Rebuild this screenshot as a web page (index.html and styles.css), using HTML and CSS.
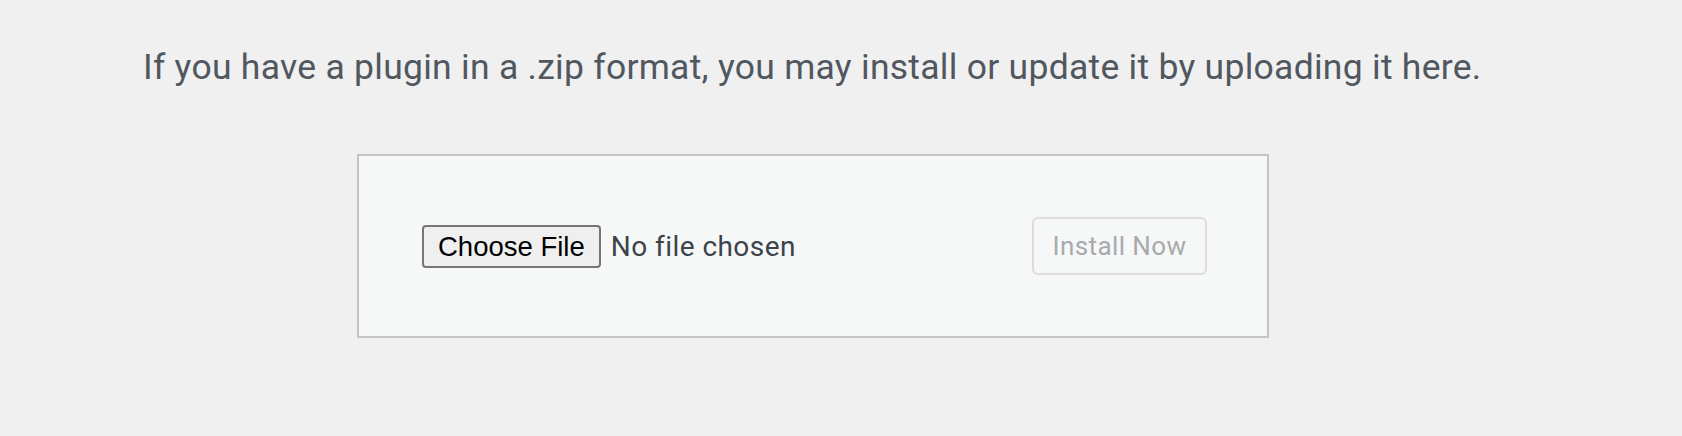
FILE: index.html
```html
<!DOCTYPE html>
<html lang="en">
<head>
  <meta charset="UTF-8">
  <title>Upload Plugin</title>
  <link rel="stylesheet" href="styles.css">
</head>
<body>
  <div class="upload-plugin">
    <p class="install-help">If you have a plugin in a .zip format, you may install or update it by uploading it here.</p>
    <form class="upload-form" onsubmit="return false">
      <label class="file-field">
        <span class="file-button">Choose File</span>
        <span class="file-name">No file chosen</span>
      </label>
      <button class="install-button" type="submit" disabled>Install Now</button>
    </form>
  </div>
</body>
</html>
```

FILE: styles.css
```css
body {
  margin: 0;
  background-color: #f0f0f1;
  font-family: Roboto, 'Noto Sans', sans-serif;
}

.upload-plugin {
  padding-top: 44px;
}

.install-help {
  margin: 0 0 64px 143px;
  color: #50575e;
  font-size: 35.5px;
  line-height: 46px;
  letter-spacing: 0.27px;
}

.upload-form {
  display: flex;
  align-items: center;
  justify-content: space-between;
  box-sizing: border-box;
  width: 912px;
  margin-left: 357px;
  padding: 61px 60px;
  background-color: #f6f7f7;
  border: 2px solid #c3c4c7;
}

.file-field {
  display: flex;
  align-items: center;
  margin-left: 3px;
}

.file-button {
  box-sizing: border-box;
  height: 43px;
  padding: 0 14px;
  border: 2px solid #767676;
  border-radius: 4px;
  background-color: #efefef;
  color: #000;
  font-family: 'Liberation Sans', Arial, sans-serif;
  font-size: 27.5px;
  line-height: 39px;
}

.file-name {
  margin-left: 10px;
  color: #3c434a;
  font-size: 28px;
  letter-spacing: 0.45px;
}

.install-button {
  box-sizing: border-box;
  width: 175px;
  height: 58px;
  padding: 0;
  border: 2px solid #dcdcde;
  border-radius: 6px;
  background-color: #f6f7f7;
  color: #a7aaad;
  font-family: Roboto, 'Noto Sans', sans-serif;
  font-size: 26px;
  letter-spacing: 0.4px;
  white-space: nowrap;
}
```
